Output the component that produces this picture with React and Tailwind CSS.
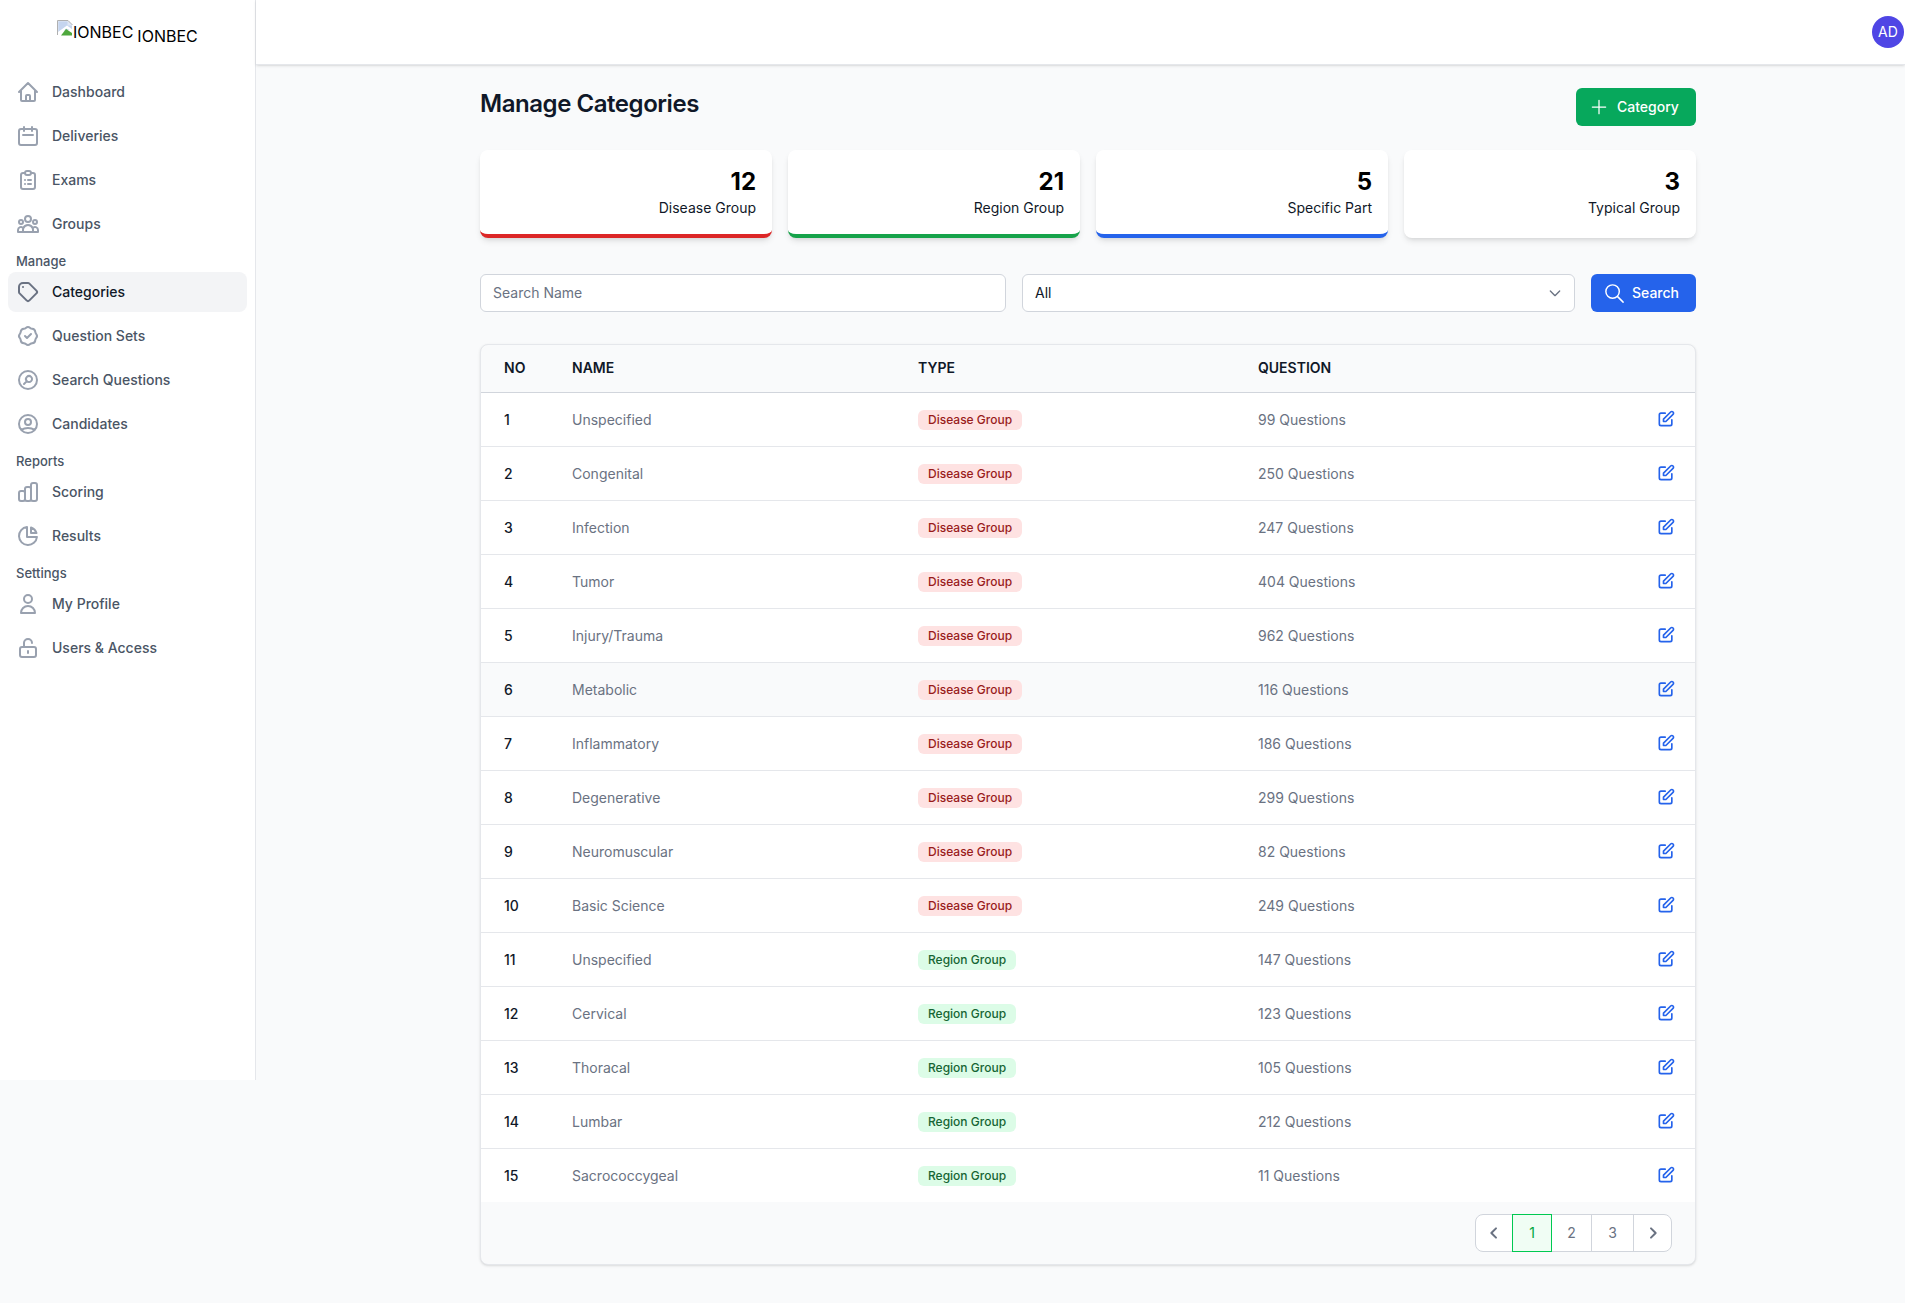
import React from "react";
import {
  HiOutlineHome,
  HiOutlineCalendar,
  HiOutlineClipboardList,
  HiOutlineUserGroup,
  HiOutlineTag,
  HiOutlineBadgeCheck,
  HiOutlineSearchCircle,
  HiOutlineUserCircle,
  HiOutlineChartBar,
  HiOutlineChartPie,
  HiOutlineUser,
  HiOutlineLockOpen,
  HiOutlinePlus,
  HiOutlineSearch,
  HiOutlineChevronDown,
  HiOutlineChevronLeft,
  HiOutlineChevronRight,
  HiOutlinePencilAlt,
} from "react-icons/hi";

const nav = [
  { label: "Dashboard", icon: HiOutlineHome },
  { label: "Deliveries", icon: HiOutlineCalendar },
  { label: "Exams", icon: HiOutlineClipboardList },
  { label: "Groups", icon: HiOutlineUserGroup },
  { section: "Manage" },
  { label: "Categories", icon: HiOutlineTag, active: true },
  { label: "Question Sets", icon: HiOutlineBadgeCheck },
  { label: "Search Questions", icon: HiOutlineSearchCircle },
  { label: "Candidates", icon: HiOutlineUserCircle },
  { section: "Reports" },
  { label: "Scoring", icon: HiOutlineChartBar },
  { label: "Results", icon: HiOutlineChartPie },
  { section: "Settings" },
  { label: "My Profile", icon: HiOutlineUser },
  { label: "Users & Access", icon: HiOutlineLockOpen },
];

const stats = [
  { value: 12, label: "Disease Group", border: "border-[#dc2626]" },
  { value: 21, label: "Region Group", border: "border-[#16a34a]" },
  { value: 5, label: "Specific Part", border: "border-[#2563eb]" },
  { value: 3, label: "Typical Group", border: "border-white" },
];

const rows = [
  ["Unspecified", "Disease Group", "99 Questions"],
  ["Congenital", "Disease Group", "250 Questions"],
  ["Infection", "Disease Group", "247 Questions"],
  ["Tumor", "Disease Group", "404 Questions"],
  ["Injury/Trauma", "Disease Group", "962 Questions"],
  ["Metabolic", "Disease Group", "116 Questions"],
  ["Inflammatory", "Disease Group", "186 Questions"],
  ["Degenerative", "Disease Group", "299 Questions"],
  ["Neuromuscular", "Disease Group", "82 Questions"],
  ["Basic Science", "Disease Group", "249 Questions"],
  ["Unspecified", "Region Group", "147 Questions"],
  ["Cervical", "Region Group", "123 Questions"],
  ["Thoracal", "Region Group", "105 Questions"],
  ["Lumbar", "Region Group", "212 Questions"],
  ["Sacrococcygeal", "Region Group", "11 Questions"],
];

function BrokenImage() {
  return (
    <svg width="16" height="16" viewBox="0 0 16 16" className="shrink-0">
      <path d="M0.5 15V0.5H11L15.5 5" fill="#dfe7f5" stroke="#b0b0b0" />
      <path d="M1.5 1.5H10.5V5.5H15V9L1.5 13Z" fill="#c5d5ef" />
      <path d="M1 15.5V12L10 5.5L15.5 9.5V11L9 8.5L4 15.5Z" fill="#fff" />
      <path d="M4 15.5L9 9L15 13V15.5Z" fill="#4fa83d" />
    </svg>
  );
}

function Sidebar() {
  return (
    <aside className="w-64 h-[1080px] shrink-0 bg-white border-r border-gray-200">
      <div className="h-[72px] pl-[57px] pt-5 flex items-start text-base leading-5 text-black">
        <span className="flex items-start">
          <BrokenImage />
          <span className="mt-[2px]">IONBEC</span>
        </span>
        <span className="ml-1 mt-[6px]">IONBEC</span>
      </div>
      <nav className="px-2 flex flex-col gap-1">
        {nav.map((item) =>
          item.section ? (
            <div
              key={item.section}
              className="h-5 pt-[5px] pl-2 text-[13px] leading-4 font-medium text-gray-600"
            >
              {item.section}
            </div>
          ) : (
            <a
              key={item.label}
              className={
                item.active
                  ? "h-10 px-2 flex items-center gap-3 rounded-lg bg-gray-100 text-sm font-medium text-gray-900"
                  : "h-10 px-2 flex items-center gap-3 rounded-lg text-sm font-medium text-gray-600"
              }
            >
              <item.icon
                className={
                  item.active
                    ? "w-6 h-6 shrink-0 text-gray-500"
                    : "w-6 h-6 shrink-0 text-gray-400"
                }
              />
              {item.label}
            </a>
          ),
        )}
      </nav>
    </aside>
  );
}

function StatCards() {
  return (
    <div className="grid grid-cols-4 gap-4 mb-9">
      {stats.map((s) => (
        <div
          key={s.label}
          className={`h-[88px] bg-white rounded-lg shadow-md border-b-4 px-4 pt-4 text-right ${s.border}`}
        >
          <div className="text-2xl leading-8 font-bold text-black">{s.value}</div>
          <div className="text-sm leading-5 text-gray-900">{s.label}</div>
        </div>
      ))}
    </div>
  );
}

function Filters() {
  return (
    <div className="flex gap-4 mb-8">
      <input
        placeholder="Search Name"
        className="w-[526px] h-[38px] px-3 pb-px bg-white border border-gray-300 rounded-md text-sm text-gray-900 placeholder:text-gray-500"
      />
      <div className="w-[553px] h-[38px] pl-3 pr-[11px] bg-white border border-gray-300 rounded-md flex items-center justify-between text-sm text-gray-900">
        All
        <HiOutlineChevronDown className="w-4 h-4 text-gray-500" />
      </div>
      <button className="flex-1 h-[38px] pl-3 bg-[#2563eb] rounded-md flex items-center gap-1.5 text-sm font-medium text-white">
        <HiOutlineSearch className="w-[23px] h-[23px]" strokeWidth={1.5} />
        Search
      </button>
    </div>
  );
}

function TypeBadge({ type }) {
  const color =
    type === "Disease Group" ? "bg-[#fee2e2] text-[#991b1b]" : "bg-[#dcfce7] text-[#166534]";
  return (
    <span className={`inline-block px-2.5 py-0.5 rounded-md text-xs leading-4 font-medium ${color}`}>
      {type}
    </span>
  );
}

function Pagination() {
  return (
    <div className="flex h-[38px] border border-gray-300 rounded-lg bg-white text-sm text-gray-500">
      <div className="w-9 flex items-center justify-center">
        <HiOutlineChevronLeft className="w-4 h-4" strokeWidth={3} />
      </div>
      <div className="w-10 -my-px flex items-center justify-center border border-green-500 bg-green-50 text-green-600">
        1
      </div>
      <div className="w-10 flex items-center justify-center border-r border-gray-300">2</div>
      <div className="w-[42px] flex items-center justify-center border-r border-gray-300">3</div>
      <div className="flex-1 flex items-center justify-center">
        <HiOutlineChevronRight className="w-4 h-4" strokeWidth={3} />
      </div>
    </div>
  );
}

function CategoryTable() {
  return (
    <div className="bg-gray-50 border border-gray-200 rounded-lg shadow-sm overflow-hidden">
      <table className="w-full table-fixed text-sm text-left">
        <colgroup>
          <col className="w-[67px]" />
          <col className="w-[346px]" />
          <col className="w-[340px]" />
          <col />
          <col className="w-[60px]" />
        </colgroup>
        <thead>
          <tr className="h-[47px] border-b border-gray-300 font-semibold text-gray-900">
            <th className="pl-[23px] font-semibold">NO</th>
            <th className="pl-6 font-semibold">NAME</th>
            <th className="pl-6 font-semibold">TYPE</th>
            <th className="pl-6 font-semibold">QUESTION</th>
            <th />
          </tr>
        </thead>
        <tbody>
          {rows.map((r, i) => (
            <tr
              key={i}
              className={
                i === 5
                  ? "h-[54px] border-b border-gray-200 bg-gray-50"
                  : i === 14
                    ? "h-[54px] bg-white"
                    : "h-[54px] border-b border-gray-200 bg-white"
              }
            >
              <td className="pl-[23px] pt-0.5 font-medium text-gray-900">{i + 1}</td>
              <td className="pl-6 pt-0.5 text-gray-500">{r[0]}</td>
              <td className="pl-6">
                <TypeBadge type={r[1]} />
              </td>
              <td className="pl-6 pt-0.5 text-gray-500">{r[2]}</td>
              <td className="pr-[19px]">
                <HiOutlinePencilAlt className="ml-auto w-5 h-5 text-[#2563eb]" />
              </td>
            </tr>
          ))}
        </tbody>
      </table>
      <div className="flex justify-end py-3 pr-[23px]">
        <div className="w-[197px]">
          <Pagination />
        </div>
      </div>
    </div>
  );
}

export default function App() {
  return (
    <div className="min-h-[1303px] flex bg-gray-50 font-['Inter',sans-serif]">
      <Sidebar />
      <div className="flex-1 min-w-0">
        <header className="h-[65px] bg-white shadow-sm border-b border-gray-200 flex items-center justify-end pr-px">
          <div className="w-8 h-8 rounded-full bg-[#4f46e5] flex items-center justify-center text-sm text-white">
            AD
          </div>
        </header>
        <main className="pl-56 pt-[23px] w-[1440px]">
          <div className="flex items-start justify-between mb-6">
            <h1 className="text-2xl leading-8 font-semibold tracking-[-0.45px] text-gray-900">Manage Categories</h1>
            <button className="w-[120px] h-[38px] pl-[13px] bg-[#07a85c] rounded-md flex items-center gap-2 text-sm font-medium text-white">
              <HiOutlinePlus className="w-5 h-5" strokeWidth={1.5} />
              Category
            </button>
          </div>
          <StatCards />
          <Filters />
          <CategoryTable />
        </main>
      </div>
    </div>
  );
}
